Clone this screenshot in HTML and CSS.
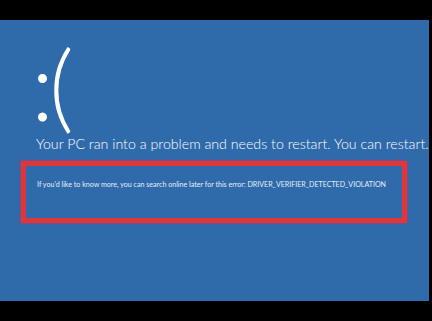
FILE: index.html
```html
<!DOCTYPE html>
<html lang="en">

<head>
    <meta charset="UTF-8" />
    <meta name="viewport" content="width=device-width, initial-scale=1" />
    <title>Blue screen</title>
    <link rel="stylesheet" href="styles.css">
</head>

<body>
    <div class="screen">
        <div class="face">:(</div>
        <p class="headline">Your PC ran into a problem and needs to restart. You can restart.</p>

        <!-- caixa vermelha em volta do erro -->
        <div class="error-box">
            <p class="error-text">If you'd like to know more, you can search online later for this error: DRIVER_VERIFIER_DETECTED_VIOLATION</p>
        </div>
    </div>
</body>

</html>
```

FILE: styles.css
```css
* {
    margin: 0;
    padding: 0;
    box-sizing: border-box;
}

body {
    font-family: 'Lato', 'Open Sans', sans-serif;
    background-color: #000;
    width: 432px;
    height: 321px;
    overflow: hidden;
}

.screen {
    margin-top: 20px;
    width: 429px;
    height: 281px;
    background-color: #2f6aab;
    color: #fff;
    overflow: hidden;
    white-space: nowrap;
}

.face {
    font-weight: 300;
    font-size: 96px;
    line-height: 100px;
    letter-spacing: -5px;
    padding: 14px 0 0 31px;
    height: 115px;
}

.headline {
    font-weight: 300;
    font-size: 14.2px;
    line-height: 18px;
    padding-left: 36px;
}

.error-box {
    margin: 8px 0 0 21px;
    width: 386px;
    height: 62px;
    border: 5px solid #e1343b;
    box-shadow: 0 0 2px #e1343b;
    padding: 14px 0 0 11px;
}

.error-text {
    font-size: 7.1px;
    color: #e6eef8;
}
```
